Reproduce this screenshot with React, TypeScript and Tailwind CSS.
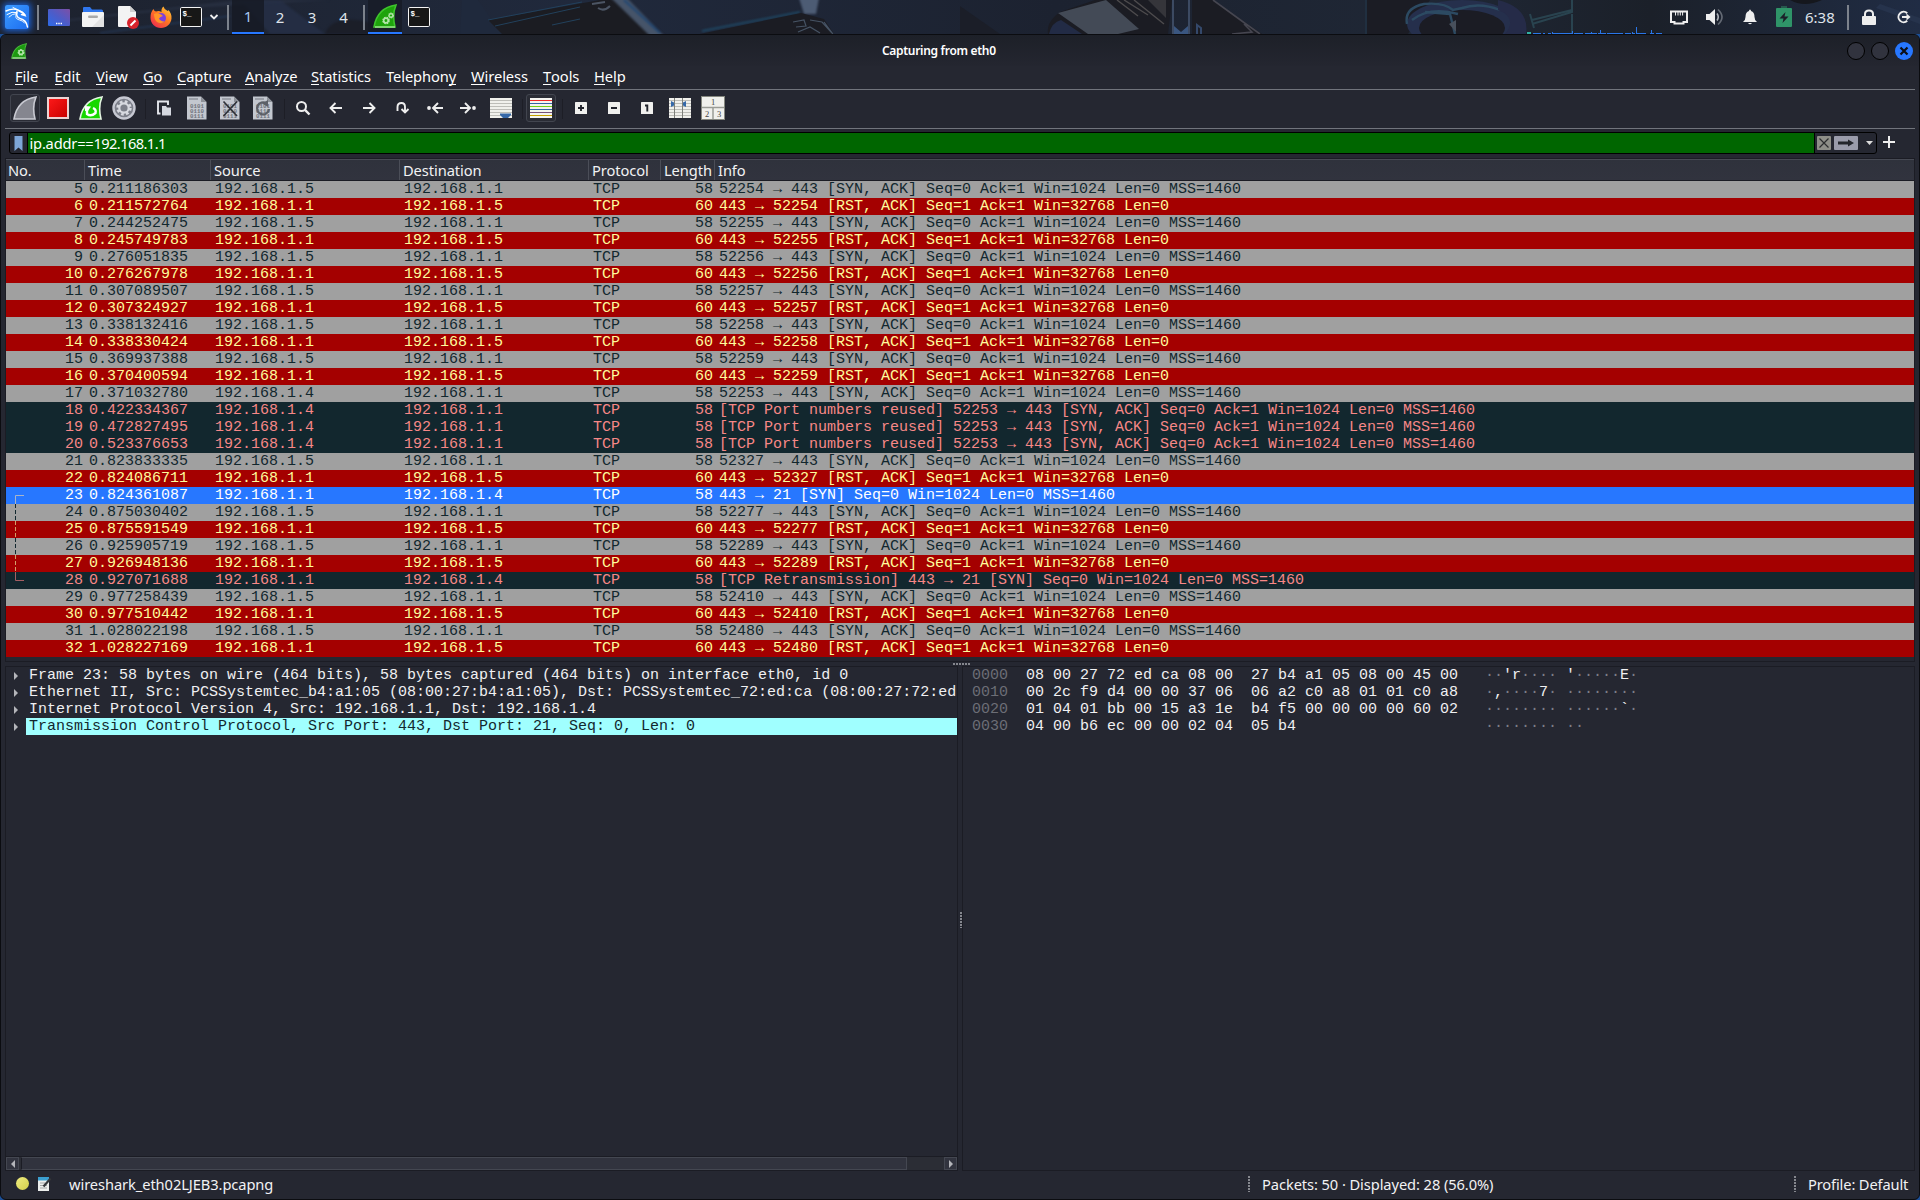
import React from "react";

type Kind = "ack" | "rst" | "bad" | "sel";
type Packet = { no: number; time: string; src: number; dst: number; len: number; info: string; kind: Kind };

const synAck = (port: number) => `${port} → 443 [SYN, ACK] Seq=0 Ack=1 Win=1024 Len=0 MSS=1460`;
const rstAck = (port: number) => `443 → ${port} [RST, ACK] Seq=1 Ack=1 Win=32768 Len=0`;

const ack = (no: number, time: string, port: number, src = 5): Packet => ({ no, time, src, dst: 1, len: 58, info: synAck(port), kind: "ack" });
const rst = (no: number, time: string, port: number): Packet => ({ no, time, src: 1, dst: 5, len: 60, info: rstAck(port), kind: "rst" });
const reused = (no: number, time: string): Packet => ({ no, time, src: 4, dst: 1, len: 58, info: `[TCP Port numbers reused] ${synAck(52253)}`, kind: "bad" });

const packets: Packet[] = [
  ack(5, "0.211186303", 52254),
  rst(6, "0.211572764", 52254),
  ack(7, "0.244252475", 52255),
  rst(8, "0.245749783", 52255),
  ack(9, "0.276051835", 52256),
  rst(10, "0.276267978", 52256),
  ack(11, "0.307089507", 52257),
  rst(12, "0.307324927", 52257),
  ack(13, "0.338132416", 52258),
  rst(14, "0.338330424", 52258),
  ack(15, "0.369937388", 52259),
  rst(16, "0.370400594", 52259),
  ack(17, "0.371032780", 52253, 4),
  reused(18, "0.422334367"),
  reused(19, "0.472827495"),
  reused(20, "0.523376653"),
  ack(21, "0.823833335", 52327),
  rst(22, "0.824086711", 52327),
  { no: 23, time: "0.824361087", src: 1, dst: 4, len: 58, info: "443 → 21 [SYN] Seq=0 Win=1024 Len=0 MSS=1460", kind: "sel" },
  ack(24, "0.875030402", 52277),
  rst(25, "0.875591549", 52277),
  ack(26, "0.925905719", 52289),
  rst(27, "0.926948136", 52289),
  { no: 28, time: "0.927071688", src: 1, dst: 4, len: 58, info: "[TCP Retransmission] 443 → 21 [SYN] Seq=0 Win=1024 Len=0 MSS=1460", kind: "bad" },
  ack(29, "0.977258439", 52410),
  rst(30, "0.977510442", 52410),
  ack(31, "1.028022198", 52480),
  rst(32, "1.028227169", 52480),
];

const rowStyle: Record<Kind, string> = {
  ack: "bg-[#a0a0a0] text-[#12272e]",
  rst: "bg-[#a40000] text-[#fffc9c]",
  bad: "bg-[#12272e] text-[#f78787]",
  sel: "bg-[#2777ff] text-white",
};

const bracketColor = (no: number) => (no === 23 ? "#a8b4c8" : no === 28 ? "#a55f63" : no % 2 ? "#d3a06a" : "#12272e");

function Bracket({ no }: { no: number }) {
  if (no < 23 || no > 28) return null;
  const c = bracketColor(no);
  return (
    <svg className="absolute left-0 top-0" width="30" height="17" fill="none" stroke={c}>
      {no === 23 && <path d="M18 8.5H9.5V17" />}
      {no === 28 && <path d="M18 8.5H9.5V0" />}
      {no > 23 && no < 28 && <path d="M9.5 0V17" strokeDasharray="4 2" />}
    </svg>
  );
}

function Fin({ size, fill, edge, children }: { size: number; fill: string; edge: string; children?: React.ReactNode }) {
  return (
    <svg width={size} height={size} viewBox="0 0 24 24">
      <path d="M1 23C3 11 9 3 23 1C20 8 20 15 22 23Z" fill={fill} stroke={edge} strokeWidth="1.6" />
      {children}
    </svg>
  );
}

function Gear({ x, y, r }: { x: number; y: number; r: number }) {
  return (
    <g>
      <circle cx={x} cy={y} r={r} fill="none" stroke="#b5e6ac" strokeWidth={r * 0.9} strokeDasharray={`${r * 0.55} ${r * 0.24}`} />
      <circle cx={x} cy={y} r={r * 0.9} fill="none" stroke="#b5e6ac" strokeWidth={r * 0.5} />
    </g>
  );
}

function Terminal() {
  return (
    <svg width="22" height="20" viewBox="0 0 22 20">
      <rect x="0.5" y="0.5" width="21" height="19" rx="1.2" fill="#171717" stroke="#f4f4f4" />
      <text x="2.4" y="9" fontFamily="Liberation Mono" fontWeight="700" fontSize="7.5" fill="#fff">$_</text>
    </svg>
  );
}

const PanelSep = () => <div className="h-[25px] w-[2px] bg-[#7c828c]" />;

function Wallpaper() {
  return (
    <svg className="absolute inset-0" width="1920" height="34" viewBox="0 0 1920 34">
      <defs>
        <linearGradient id="sky" x1="0" x2="1" y1="0" y2="0">
          <stop offset="0" stopColor="#1d222e" />
          <stop offset="0.3" stopColor="#20293c" />
          <stop offset="0.55" stopColor="#1c2230" />
          <stop offset="0.75" stopColor="#1f2735" />
          <stop offset="0.86" stopColor="#1b2029" />
          <stop offset="1" stopColor="#202c44" />
        </linearGradient>
        <filter id="soft" x="-20%" y="-20%" width="140%" height="140%" colorInterpolationFilters="sRGB"><feGaussianBlur stdDeviation="1.3" /></filter>
      </defs>
      <rect width="1920" height="34" fill="url(#sky)" />
      <g filter="url(#soft)">
        <path d="M40 24L190 8L330 0H240L60 20Z" fill="#2b3346" opacity="0.7" />
        <path d="M240 0H280L325 34H270Z" fill="#253047" opacity="0.8" />
        <path d="M100 33L230 16" stroke="#274064" />
        <path d="M325 34C330 16 360 14 400 34Z" fill="#1b1e28" />
      </g>
      <path d="M462 0H478L502 34H460Z" fill="#1f293c" />
      <path d="M488 20L600 0H618L652 34H502Z" fill="#1b1c22" />
      <path d="M488 20L582 2M495 26L580 7M552 25L580 19" stroke="#22415c" strokeWidth="1" fill="none" />
      <path d="M592 4L605 2M598 8Q604 12 610 6" stroke="#4c5564" strokeWidth="2" fill="none" />
      <g filter="url(#soft)">
        <path d="M611 -2H627L664 36H650Z" fill="#465469" />
        <path d="M624 0L660 33" stroke="#204672" strokeWidth="2" fill="none" />
        <path d="M799 -2H819L816 14H804Z" fill="#4d5c74" />
        <path d="M702 31L800 12" stroke="#1f5170" strokeWidth="1.5" />
      </g>
      <path d="M700 34L801 13L824 19L834 34Z" fill="#1b1c23" />
      <path d="M793 22L804 20L806 26L796 27M810 20L822 22L832 33M798 32L810 27L820 33M824 22L833 34" stroke="#465364" strokeWidth="1.2" fill="none" />
      <path d="M960 6V34H1000Z" fill="#1b1e28" />
      <path d="M1048 34Q1046 22 1060 12L1095 0H1172L1168 34Z" fill="#1b1c23" />
      <path d="M1058 13L1106 0L1139 29L1118 34H1088Z" fill="#434a56" />
      <path d="M1049 34Q1052 22 1061 20L1082 34Z" fill="#222b45" />
      <path d="M1117 0L1138 16M1124 0L1148 15M1134 0L1164 24" stroke="#4d4b4d" strokeWidth="1.4" fill="none" />
      <path d="M1148 0H1166V18Z" fill="#35353a" />
      <path d="M1173 0V34M1189 0V34" stroke="#3c4a62" strokeWidth="2" />
      <path d="M1174 26L1181 32L1188 26V34H1174Z" fill="#3a5680" />
      <path d="M1192 0H1213L1262 34H1192Z" fill="#1b1c23" />
      <path d="M1197 34V25L1201 28V34" stroke="#34486a" strokeWidth="2" fill="none" />
      <path d="M1213 0L1246 24L1260 34M1244 24L1252 32L1232 34" stroke="#464650" strokeWidth="1.6" fill="none" />
      <path d="M1367 0H1430L1408 34H1367Z" fill="#1b1c24" />
      <path d="M1366 0V34" stroke="#22384c" />
      <ellipse cx="1462" cy="24" rx="55" ry="24" fill="#252f4c" />
      <ellipse cx="1462" cy="28" rx="43" ry="18" fill="#1b1c24" />
      <path d="M1407 24Q1404 8 1424 4Q1444 2 1453 10L1462 8Q1480 2 1500 10M1425 12L1450 14L1455 34M1412 20Q1430 6 1458 14" stroke="#2c4a62" strokeWidth="2.4" fill="none" />
      <path d="M1449 24L1456 20V32Z" fill="#48505c" />
      <path d="M1498 0Q1530 8 1526 34H1505Q1518 18 1498 10Z" fill="#252b48" />
      <path d="M1532 24L1572 12V0M1532 20L1572 10M1572 14V33M1530 14L1534 28" stroke="#29434f" strokeWidth="2" fill="none" />
      <path d="M1790 0Q1804 8 1822 0Z" fill="#15171d" />
      <path d="M1880 4L1920 18V24L1876 8Z" fill="#26334c" />
      <path d="M1527 33h4" stroke="#35d6c3" strokeWidth="1.6" />
      <path d="M1533 33.5h8M1543 33.5h2M1548 33.5h3M1552 33.5h20M1574 33.5h9M1585 33.5h12M1598 33.5h8M1607 33.5h16M1625 33.5h6M1633 33.5h2M1637 33.5h9M1650 33.5h4M1656 33.5h6" stroke="#2a76e8" />
      <path d="M1572.500 31V34M1591.500 32V34M1600.500 30V34M1632.500 32V34M1636.500 27V34M1651.500 30V34M1552.500 32V34" stroke="#2a76e8" />
    </svg>
  );
}

function DesktopPanel() {
  return (
    <header className="relative h-[34px] w-full shrink-0 overflow-hidden text-[15px] text-[#dfe3ea]">
      <Wallpaper />
      <div className="relative flex h-full items-center">
        <div className="ml-[5px] flex h-6 w-6 items-center justify-center rounded-[2px] bg-gradient-to-br from-[#3d9bff] to-[#1e6df0] shadow-[0_0_6px_2px_#1b5fd0]">
          <svg width="24" height="24" viewBox="0 0 24 24" fill="none" stroke="#fff" strokeLinecap="round">
            <path d="M1 6Q8 2.500 14 5.500Q18 7 20 10" strokeWidth="1.4" />
            <path d="M2 9.500Q7 6 12 7.500" strokeWidth="1" />
            <path d="M4 12Q7 8.500 12 8.500" strokeWidth="0.9" />
            <path d="M12 6Q10.500 12 15 13.500Q21.500 15 22.500 22" strokeWidth="1.5" />
            <path d="M11.500 8Q9 14 14.500 15Q18 15.500 19.500 18" strokeWidth="0.9" />
            <path d="M14 6Q18 7 20 10.500L16.500 9.500" strokeWidth="1.5" />
            <path d="M8 2.500L13 5" strokeWidth="1" />
          </svg>
        </div>
        <div className="ml-[8px]"><PanelSep /></div>
        <svg className="ml-[9px]" width="22" height="17" viewBox="0 0 22 17">
          <defs>
            <linearGradient id="desk" x1="0" y1="1" x2="1" y2="0"><stop offset="0" stopColor="#2d6be8" /><stop offset="0.5" stopColor="#4d5cc8" /><stop offset="1" stopColor="#7d4fa6" /></linearGradient>
          </defs>
          <rect width="22" height="17" rx="1" fill="url(#desk)" />
          <path d="M8 14.500h6" stroke="#fff" strokeWidth="1.4" strokeDasharray="1.4 0.9" />
        </svg>
        <svg className="ml-[12px]" width="22" height="20" viewBox="0 0 22 20">
          <path d="M1 1Q1 0 2 0H8L10 2.500H19.500Q21 2.500 21 4V8H1Z" fill="#2f76ee" />
          <rect y="5" width="22" height="15" rx="1" fill="#f3f3f3" />
          <path d="M22 8V19Q22 20 21 20H10Z" fill="#e2e2e2" />
          <rect x="6" y="8.500" width="10" height="2.600" rx="1.300" fill="#a9a9a9" />
        </svg>
        <svg className="ml-[14px]" width="21" height="23" viewBox="0 0 21 23">
          <path d="M1 0H12L18 6V21H1Q0 21 0 20V1Q0 0 1 0Z" fill="#f3f3f3" />
          <path d="M12 0V6H18Z" fill="#cfcfcf" />
          <circle cx="15" cy="17" r="6" fill="#d8232c" />
          <path d="M12.500 19.500L17.500 14.500" stroke="#fff" strokeWidth="2" />
        </svg>
        <svg className="ml-[11px]" width="22" height="22" viewBox="0 0 22 22">
          <defs>
            <linearGradient id="fx" x1="1" y1="0" x2="0.2" y2="1"><stop offset="0" stopColor="#ffd53d" /><stop offset="0.5" stopColor="#ff7a22" /><stop offset="1" stopColor="#ee2c4f" /></linearGradient>
          </defs>
          <path d="M3.500 3Q4 5 6 5.500Q9 4.500 11.500 6Q11 2.500 13.500 0.500Q14 3 17 4.500Q18 5.500 18.500 4Q22 8 21.500 12.500C21 18 16.500 22 11 22C5 22 0.500 17.500 0.500 11.800Q0.500 6 3.500 3Z" fill="url(#fx)" />
          <circle cx="11" cy="12" r="5" fill="#7b3fe0" />
          <path d="M4 8Q7 6.500 11 8.500L13 10Q10 10.500 9 12.500Q10 15 14.500 15.500Q11 18.500 7 16Q4 13 4 8Z" fill="#ff9428" />
        </svg>
        <div className="ml-[8px]"><Terminal /></div>
        <svg className="ml-[7px]" width="10" height="8" viewBox="0 0 10 8" fill="none" stroke="#eee" strokeWidth="1.8"><path d="M1.500 2L5 5.500L8.500 2" /></svg>
        <div className="ml-[8px]"><PanelSep /></div>
        <div className="ml-[3px] flex h-full items-center">
          <div className="flex h-full w-8 items-center justify-center border-b-2 border-[#2777ff] bg-[#151923]/80 pt-[1px] text-[#a6c8ee]">1</div>
          <div className="w-8 text-center">2</div>
          <div className="w-8 text-center">3</div>
          <div className="w-8 pr-px text-center">4</div>
        </div>
        <div className="ml-[3px]"><PanelSep /></div>
        <div className="ml-[3px] flex h-full w-[34px] items-center justify-center border-b-2 border-[#2777ff] bg-[#151923]/70">
          <Fin size={24} fill="#1ea30c" edge="#3fc42d"><path d="M2 22H22V24H2Z" fill="#7fd472" /><Gear x={13} y={16.500} r={2.600} /><Gear x={18} y={11.500} r={2} /></Fin>
        </div>
        <div className="ml-[6px]"><Terminal /></div>

        <div className="ml-auto flex h-full items-center pr-[9px]">
          <svg width="18" height="15" viewBox="0 0 18 15" fill="none" stroke="#eee" strokeWidth="2">
            <path d="M1 1.500H17V12H13.500V13.500H4.500V12H1Z" />
            <path d="M5.500 2V5.500M8 2V5.500M10.300 2V5.500M12.600 2V5.500" strokeWidth="1" />
          </svg>
          <svg className="ml-[18px]" width="18" height="18" viewBox="0 0 18 18" fill="none">
            <path d="M0 6H3.500L9 1V17L3.500 12H0Z" fill="#eee" />
            <path d="M11 5.500Q13.500 9 11 12.500" stroke="#aeb2b8" strokeWidth="1.600" />
            <path d="M12 1.500Q20 9 12 16.500" stroke="#646a74" strokeWidth="1.700" />
          </svg>
          <svg className="ml-[18px]" width="16" height="16" viewBox="0 0 16 16" fill="#eee">
            <path d="M8 0.500Q9 0.500 9 2Q12.500 3 12.500 8Q12.500 11 15 13H1Q3.500 11 3.500 8Q3.500 3 7 2Q7 0.500 8 0.500ZM6 14H10Q8 16.500 6 14Z" />
          </svg>
          <svg className="ml-[18px]" width="16" height="22" viewBox="0 0 16 22">
            <path d="M5 0H11V2H15Q16 2 16 3V20Q16 21 15 21H1Q0 21 0 20V3Q0 2 1 2H5Z" fill="#2f9468" />
            <path d="M5 0H11V2H5Z" fill="#27584d" />
            <path d="M9.500 6L3.500 12.500H7.500L6.500 17L12.500 10.500H8.500Z" fill="#1b2029" />
          </svg>
          <span className="ml-[13px] w-[30px] whitespace-nowrap text-[15px]">6:38</span>
          <div className="ml-[12px]"><PanelSep /></div>
          <svg className="ml-[13px]" width="14" height="16" viewBox="0 0 14 16">
            <path d="M3 8V5Q3 1.500 7 1.500Q11 1.500 11 5V8" fill="none" stroke="#eee" strokeWidth="2" />
            <rect y="7" width="14" height="9" rx="1" fill="#eee" />
          </svg>
          <svg className="ml-[20px]" width="15" height="14" viewBox="0 0 15 14" fill="none" stroke="#eee" strokeWidth="2">
            <path d="M11.200 3.200A5.200 5.200 0 1 0 11.200 10.800" />
            <path d="M6 7H12" />
            <path d="M10.500 3.500L14.500 7L10.500 10.500Z" fill="#eee" stroke="none" />
          </svg>
        </div>
      </div>
    </header>
  );
}

function TitleBar() {
  return (
    <div className="relative flex h-[31px] shrink-0 items-center justify-between bg-gradient-to-b from-[#1d2028] to-[#242630] pl-[11px] pr-[7px]">
      <Fin size={16} fill="#1c9a10" edge="#48b53c"><path d="M2 21H22V24H2Z" fill="#7fc776" /><Gear x={15} y={14} r={3.500} /></Fin>
      <span className="absolute left-[882px] top-[8px] whitespace-nowrap text-[12px] font-semibold leading-4 tracking-[-0.3px] text-white">Capturing from eth0</span>
      <div className="flex gap-[6px]">
        <div className="h-[18px] w-[18px] rounded-full border border-black bg-[#31333e]" />
        <div className="h-[18px] w-[18px] rounded-full border border-black bg-[#31333e]" />
        <div className="flex h-[18px] w-[18px] items-center justify-center rounded-full bg-[#2777ff]">
          <svg width="10" height="10" viewBox="0 0 10 10" stroke="#0c0e14" strokeWidth="2.200"><path d="M1.500 1.500L8.500 8.500M8.500 1.500L1.500 8.500" /></svg>
        </div>
      </div>
    </div>
  );
}

const menus: [string, string, string, string][] = [
  ["", "F", "ile", "w-[39.5px]"],
  ["", "E", "dit", "w-[41.5px]"],
  ["", "V", "iew", "w-[47px]"],
  ["", "G", "o", "w-[34px]"],
  ["", "C", "apture", "w-[68px]"],
  ["", "A", "nalyze", "w-[66px]"],
  ["", "S", "tatistics", "w-[75px]"],
  ["Telephon", "y", "", "w-[85px]"],
  ["", "W", "ireless", "w-[72px]"],
  ["", "T", "ools", "w-[51px]"],
  ["", "H", "elp", "w-[50px]"],
];

function MenuBar() {
  return (
    <nav className="flex h-[23px] shrink-0 pl-[15px] text-[14.67px] leading-[21px] tracking-[-0.08px] text-white">
      {menus.map(([a, k, b, w]) => (
        <div key={a + k} className={`${w} whitespace-nowrap`}>
          {a}
          <span className="inline-block h-[19px] border-b border-white align-top leading-[21px]">{k}</span>
          {b}
        </div>
      ))}
    </nav>
  );
}

function Tool({ active, children }: { active?: boolean; children: React.ReactNode }) {
  return (
    <div className="flex h-[36px] w-[33px] items-center justify-center">
      <div className={active ? "flex h-[28px] w-[30px] items-center justify-center rounded-[3px] border border-[#42454f] bg-[#2a2c35]" : "flex h-[28px] w-[30px] items-center justify-center"}>{children}</div>
    </div>
  );
}

const ToolSep = () => <div className="ml-[4px] mr-[2px] h-5 w-px self-center bg-[#1d1e26]" />;

function FileIcon({ children }: { children?: React.ReactNode }) {
  return (
    <svg width="20" height="24" viewBox="0 0 20 24">
      <path d="M0 0.500H14L19.500 6V23.500H0Z" fill="#c3c7cf" />
      <path d="M14 0.500V6H19.500Z" fill="#8d9198" />
      <path d="M2 3h9" stroke="#9ca0a8" strokeWidth="2" />
      <g fontFamily="Liberation Mono" fontWeight="700" fontSize="5.800" fill="#70747c">
        <text x="3" y="12">0101</text>
        <text x="3" y="17.200">0110</text>
        <text x="3" y="22.400">0111</text>
      </g>
      {children}
    </svg>
  );
}

function Arrow({ d, dot }: { d: string; dot?: number }) {
  return (
    <svg width="16" height="14" viewBox="0 0 16 14" fill="none" stroke="#eee" strokeWidth="1.900">
      <path d={d} />
      {dot !== undefined && <circle cx={dot} cy="7" r="1.900" fill="#eee" stroke="none" />}
    </svg>
  );
}

function Zoom({ d }: { d: string }) {
  return (
    <svg width="12" height="12" viewBox="0 0 12 12">
      <rect width="12" height="12" rx="0.600" fill="#f0f0ee" />
      <path d={d} stroke="#20222b" strokeWidth="1.900" fill="none" />
    </svg>
  );
}

function ToolBar() {
  return (
    <div className="ml-[5px] mr-[5px] flex h-[40px] shrink-0 items-start border-y border-[#71747c] pl-[3.5px]">
      <Tool active><Fin size={24} fill="#85868f" edge="#c9cad2" /></Tool>
      <Tool>
        <svg width="22" height="22" viewBox="0 0 22 22">
          <defs><linearGradient id="stop" x1="0" y1="0" x2="1" y2="1"><stop offset="0" stopColor="#ff1a1a" /><stop offset="1" stopColor="#c80000" /></linearGradient></defs>
          <rect x="1" y="1" width="20" height="20" fill="url(#stop)" stroke="#ecd3d3" strokeWidth="2" />
        </svg>
      </Tool>
      <Tool>
        <Fin size={24} fill="#17d800" edge="#e4f5e2">
          <path d="M8 12V18Q12 21 16.500 17Q17.500 13.500 14 12" fill="none" stroke="#fff" strokeWidth="2.400" />
          <path d="M6 15V10L12 10.500L9 15Z" fill="#fff" />
        </Fin>
      </Tool>
      <Tool>
        <svg width="24" height="24" viewBox="0 0 24 24" fill="none">
          <circle cx="12" cy="12" r="10.500" fill="#7c7f8a" stroke="#c6c8d2" strokeWidth="2.400" />
          <circle cx="12" cy="12" r="6.200" stroke="#d7d9e0" strokeWidth="3" strokeDasharray="2.600 2.270" />
          <circle cx="12" cy="12" r="4.700" fill="#7c7f8a" stroke="#d7d9e0" strokeWidth="2.200" />
        </svg>
      </Tool>
      <ToolSep />
      <Tool>
        <svg width="14" height="16" viewBox="0 0 14 16">
          <path d="M3.500 13.500H1V1.500H11V5" fill="none" stroke="#e4e6ec" strokeWidth="1.900" />
          <path d="M5 6H9L10 7.500H14V15.500H5Z" fill="#d5d8e0" />
        </svg>
      </Tool>
      <Tool><FileIcon /></Tool>
      <Tool><FileIcon><path d="M3.500 5.500L17 20M17 5.500L3.500 20" stroke="#2e3138" strokeWidth="1.700" /></FileIcon></Tool>
      <Tool><FileIcon><path d="M13.500 7.500A6 6 0 1 0 16 13" fill="none" stroke="#5c6068" strokeWidth="2.200" /><path d="M9 7.500L15 4V11Z" fill="#5c6068" /></FileIcon></Tool>
      <ToolSep />
      <Tool>
        <svg width="16" height="16" viewBox="0 0 16 16" fill="none" stroke="#eee"><circle cx="6.500" cy="6.500" r="4.500" strokeWidth="2" /><path d="M9.700 9.700L14.500 14.500" strokeWidth="2.400" /></svg>
      </Tool>
      <Tool><Arrow d="M7.500 2L2.500 7L7.500 12M3 7H14" /></Tool>
      <Tool><Arrow d="M8.500 2L13.500 7L8.500 12M2 7H13" /></Tool>
      <Tool><Arrow d="M3.500 10V6Q3.500 2 7.500 2Q11 2 11 6V11M7.500 8L11 11.500L14.500 8" /></Tool>
      <Tool><Arrow d="M11 2L6 7L11 12M6.500 7H16" dot={2} /></Tool>
      <Tool><Arrow d="M5 2L10 7L5 12M0 7H9.500" dot={14} /></Tool>
      <Tool>
        <svg width="22" height="20" viewBox="0 0 22 20">
          <rect width="22" height="20" fill="#f0f0ec" />
          <path d="M0 2.500H22M0 5.500H22M0 8.500H22M0 11.500H22M0 14.500H22M0 17.500H22" stroke="#bdbdb8" />
          <path d="M10 15.500H21V17L18 20H13L10 17Z" fill="#3568a8" />
        </svg>
      </Tool>
      <ToolSep />
      <Tool active>
        <svg width="22" height="20" viewBox="0 0 22 20" className="shrink-0">
          <rect width="22" height="20" fill="#f4f4f0" />
          <path d="M0 2.500H22" stroke="#ef2929" />
          <path d="M0 5.500H22" stroke="#3465a4" />
          <path d="M0 8.500H22" stroke="#73d216" />
          <path d="M0 11.500H22" stroke="#3465a4" />
          <path d="M0 14.500H22" stroke="#75507b" />
          <path d="M0 17.500H22" stroke="#c4a000" />
        </svg>
      </Tool>
      <ToolSep />
      <Tool><Zoom d="M3 6H9M6 3V9" /></Tool>
      <Tool><Zoom d="M3 6H9" /></Tool>
      <Tool><Zoom d="M4 3.500H6.300V9.500" /></Tool>
      <Tool>
        <svg width="22" height="20" viewBox="0 0 22 20">
          <rect width="22" height="20" fill="#f0f0ec" />
          <path d="M0 2.500H22M0 5.500H22M0 8.500H22M0 11.500H22M0 14.500H22M0 17.500H22" stroke="#bdbdb8" />
          <path d="M5.500 0V20M13.500 0V20" stroke="#7d7f7a" />
          <path d="M2 3L5 4.500V7.500L2 9ZM17 3L14 4.500V7.500L17 9Z" fill="#3568a8" />
        </svg>
      </Tool>
      <Tool>
        <svg width="24" height="24" viewBox="0 0 24 24">
          <rect x="0.500" y="0.500" width="23" height="23" fill="#f0f0ec" stroke="#85877f" />
          <path d="M1 11.500H23M12 12V23" stroke="#9a9c96" strokeWidth="1.500" />
          <g fontFamily="Liberation Serif" fontSize="8.500" fill="#444"><text x="10" y="9">1</text><text x="4" y="20.500">2</text><text x="16" y="20.500">3</text></g>
        </svg>
      </Tool>
    </div>
  );
}

function FilterBar() {
  return (
    <div className="flex h-[29px] shrink-0 items-start pl-[9px] pt-[3px]">
      <div className="flex h-[22px] w-[1868px] items-stretch overflow-hidden rounded-[3px] border border-black">
        <div className="flex w-[18px] items-center justify-center border-r border-black">
          <svg className="-ml-px" width="9" height="15" viewBox="0 0 9 15"><path d="M0.500 0H8.500V15L4.500 11.500L0.500 15Z" fill="#7ea7d8" /></svg>
        </div>
        <div className="flex-1 bg-[#006600] pl-[1.5px] text-[14.67px] leading-[20px] tracking-[-0.2px] text-white">
          ip.addr==<span className="tracking-[-0.6px]">192.168.1.1</span>
        </div>
        <div className="flex w-[62px] items-center border-l border-black pl-[2px]">
          <svg width="14" height="14" viewBox="0 0 14 14"><rect width="14" height="14" rx="1" fill="#8e8f88" /><path d="M2.500 2.500L11.500 11.500M11.500 2.500L2.500 11.500" stroke="#2b2d2e" strokeWidth="1.200" /></svg>
          <svg className="ml-[3px]" width="24" height="14" viewBox="0 0 24 14"><rect width="24" height="14" rx="1" fill="#9a9cab" /><path d="M4 5.500H14V3.500L20 7L14 10.500V8.500H4Z" fill="#23262c" /></svg>
          <svg className="ml-[8px]" width="7" height="4" viewBox="0 0 7 4"><path d="M0 0H7L3.500 4Z" fill="#ddd" /></svg>
        </div>
      </div>
      <svg className="ml-[6px] mt-[4px]" width="12" height="12" viewBox="0 0 12 12" stroke="#eee" strokeWidth="2"><path d="M6 0V12M0 6H12" /></svg>
    </div>
  );
}

const headers: [string, string][] = [
  ["No.", "w-[79px] pl-[2px]"],
  ["Time", "w-[126px] pl-[3px]"],
  ["Source", "w-[189px] pl-[3px]"],
  ["Destination", "w-[189px] pl-[3px]"],
  ["Protocol", "w-[72px] pl-[3px]"],
  ["Length", "w-[54px] pl-[3px]"],
  ["Info", "flex-1 pl-[3px]"],
];

function PacketList() {
  return (
    <section className="mx-[5px] flex h-[504px] shrink-0 flex-col overflow-hidden border border-[#1b1c24]">
      <div className="flex h-[22px] shrink-0 border-b border-t border-b-[#1b1c24] border-t-[#474a54] bg-gradient-to-b from-[#2f323c] to-[#31333e] text-[14.67px] leading-[20px] tracking-[-0.08px] text-[#f2f2f4]">
        {headers.map(([h, c]) => (
          <div key={h} className={`${c} whitespace-nowrap border-r border-[#4b4e58] last:border-r-0`}>{h}</div>
        ))}
      </div>
      <div className="font-['Liberation_Mono'] text-[15px] leading-[17px]">
        {packets.map((p) => (
          <div key={p.no} className={`relative flex h-[17px] whitespace-pre ${rowStyle[p.kind]}`}>
            <Bracket no={p.no} />
            <span className="w-[77px] text-right">{p.no}</span>
            <span className="ml-[6px] w-[126px]">{p.time}</span>
            <span className="w-[189px]">192.168.1.{p.src}</span>
            <span className="w-[189px]">192.168.1.{p.dst}</span>
            <span className="w-[72px]">TCP</span>
            <span className="w-[48px] text-right">{p.len}</span>
            <span className="ml-[6px]">{p.info}</span>
          </div>
        ))}
      </div>
    </section>
  );
}

const details = [
  "Frame 23: 58 bytes on wire (464 bits), 58 bytes captured (464 bits) on interface eth0, id 0",
  "Ethernet II, Src: PCSSystemtec_b4:a1:05 (08:00:27:b4:a1:05), Dst: PCSSystemtec_72:ed:ca (08:00:27:72:ed",
  "Internet Protocol Version 4, Src: 192.168.1.1, Dst: 192.168.1.4",
  "Transmission Control Protocol, Src Port: 443, Dst Port: 21, Seq: 0, Len: 0",
];

function Triangle({ left }: { left?: boolean }) {
  return (
    <svg width="4" height="8" viewBox="0 0 4 8"><path d={left ? "M4 0V8L0 4Z" : "M0 0V8L4 4Z"} fill="#b4b5ba" /></svg>
  );
}

function Details() {
  return (
    <section className="flex w-[953px] flex-col border border-[#1b1c24]">
      <div className="flex-1 font-['Liberation_Mono'] text-[15px] leading-[17px] text-[#f0f0f2]">
        {details.map((d, i) => (
          <div key={d} className="flex h-[17px] overflow-hidden whitespace-pre">
            <div className="flex w-5 items-center pl-[8px]"><Triangle /></div>
            <div className={i === 3 ? "flex-1 bg-[#a0ffff] pl-[3px] text-[#12272e]" : "flex-1 pl-[3px]"}>{d}</div>
          </div>
        ))}
      </div>
      <div className="flex h-[14px] border-t border-[#1b1c24] bg-[#2b2d35]">
        <div className="flex w-[13px] items-center justify-center border border-[#444751] bg-[#31333e]"><Triangle left /></div>
        <div className="ml-[2px] w-[886px] border border-[#444751] border-l-[#1b1c24] bg-[#31333e]" />
        <div className="ml-auto flex w-[13px] items-center justify-center border border-[#444751] bg-[#31333e]"><Triangle /></div>
      </div>
    </section>
  );
}

const hex: [string, string, string][] = [
  ["0000", "08 00 27 72 ed ca 08 00  27 b4 a1 05 08 00 45 00", "··'r···· '·····E·"],
  ["0010", "00 2c f9 d4 00 00 37 06  06 a2 c0 a8 01 01 c0 a8", "·,····7· ········"],
  ["0020", "01 04 01 bb 00 15 a3 1e  b4 f5 00 00 00 00 60 02", "········ ······`·"],
  ["0030", "04 00 b6 ec 00 00 02 04  05 b4", "········ ··"],
];

function HexDump() {
  return (
    <section className="flex-1 border border-[#1b1c24] pl-[9px] font-['Liberation_Mono'] text-[15px] leading-[17px] text-[#f0f0f2]">
      {hex.map(([o, b, a]) => (
        <div key={o} className="flex h-[17px] whitespace-pre">
          <span className="w-[54px] text-[#6c6e76]">{o}</span>
          <span className="w-[459px]">{b}</span>
          <span>
            {a.split(/(·+)/).map((s, i) => (
              <span key={i} className={s.startsWith("·") ? "text-[#7c7e86]" : ""}>{s}</span>
            ))}
          </span>
        </div>
      ))}
    </section>
  );
}

const Grip = () => (
  <svg className="shrink-0" width="2" height="16" viewBox="0 0 2 16"><path d="M1 0V16" stroke="#85878e" strokeWidth="2" strokeDasharray="2 1" /></svg>
);

function StatusBar() {
  return (
    <footer className="flex h-[29px] shrink-0 items-center pb-[4px] text-[14.67px] leading-[24px] tracking-[-0.08px] text-[#f2f2f4]">
      <div className="ml-[16px] h-[13px] w-[13px] rounded-full bg-gradient-to-br from-[#efec80] to-[#d3cf48]" />
      <svg className="ml-[9px]" width="14" height="14" viewBox="0 0 14 14">
        <path d="M0 0H11V14H0Z" fill="#eceeec" />
        <path d="M0 0H11V3.500H0Z" fill="#3b9fd0" />
        <path d="M2 6H7M2 8.500H9M2 11H9" stroke="#a5a8a8" />
        <path d="M5.500 9.500L12.500 1.500" stroke="#34373a" strokeWidth="2.200" />
      </svg>
      <span className="ml-[17px] w-[1179px] pt-px">wireshark_eth02LJEB3.pcapng</span>
      <Grip />
      <span className="ml-[12px] w-[532px] pt-px">Packets: 50 · Displayed: 28 (56.0%)</span>
      <Grip />
      <span className="ml-[12px] whitespace-nowrap pt-px tracking-[-0.14px]">Profile: Default</span>
    </footer>
  );
}

export default function App() {
  return (
    <div className="flex h-[1200px] w-[1920px] flex-col overflow-hidden bg-[#1c4f96] font-['Noto_Sans',sans-serif]">
      <DesktopPanel />
      <main className="flex h-[1166px] flex-col overflow-hidden rounded-[6px] border border-[#0b0c10] bg-[#252731]">
        <div className="-mx-px flex flex-1 flex-col">
          <TitleBar />
          <MenuBar />
          <ToolBar />
          <FilterBar />
          <PacketList />
          <div className="relative flex h-[4px] shrink-0 items-center justify-center">
            <svg className="absolute left-[953px] top-[1px]" width="17" height="2"><path d="M0 1H17" stroke="#85878e" strokeWidth="2" strokeDasharray="2 1" /></svg>
          </div>
          <div className="mx-[5px] flex h-[505px] shrink-0">
            <Details />
            <div className="flex w-[4px] items-center justify-end pt-[3px]">
              <Grip />
            </div>
            <HexDump />
          </div>
          <StatusBar />
        </div>
      </main>
    </div>
  );
}
